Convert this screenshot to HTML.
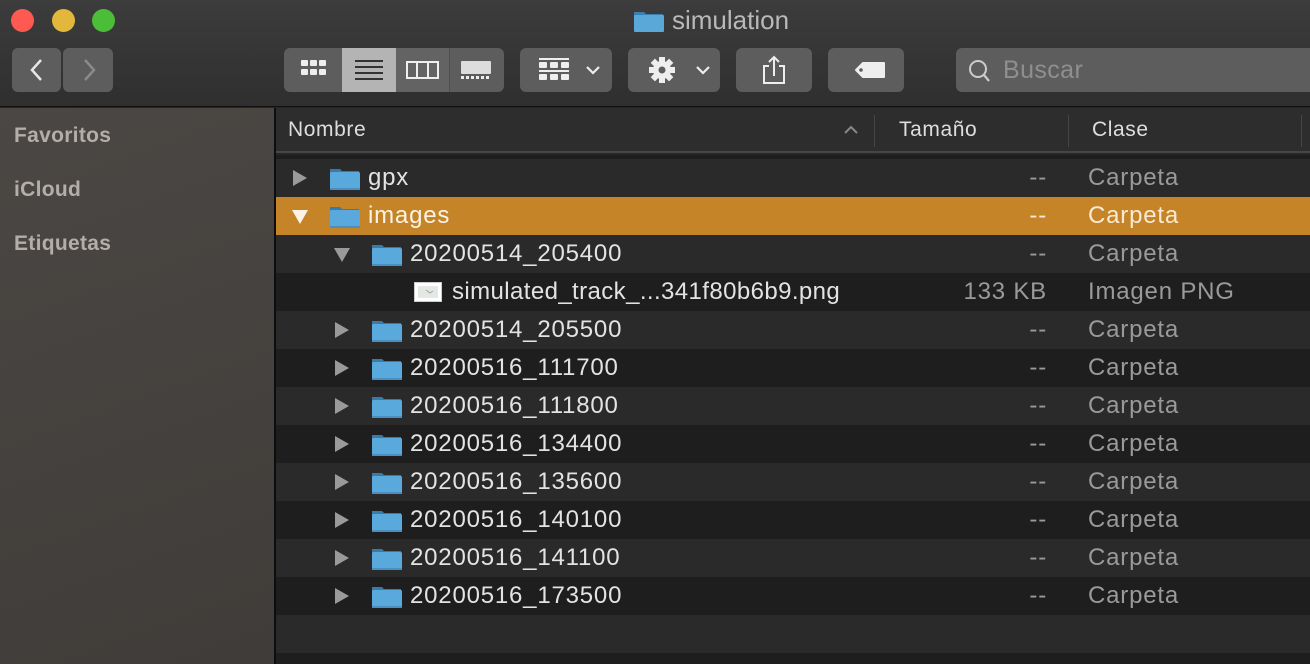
<!DOCTYPE html>
<html><head><meta charset="utf-8"><style>
*{margin:0;padding:0;box-sizing:border-box}
html,body{width:1310px;height:664px;overflow:hidden}
body{background:#262626;font-family:"Liberation Sans",Helvetica,sans-serif;position:relative}
.tb{position:absolute;left:0;top:0;width:1310px;height:107px;background:linear-gradient(#3c3c3c,#2f2f2f);border-bottom:1px solid #111}
.dot{position:absolute;top:9px;width:23px;height:23px;border-radius:50%}
.btn{position:absolute;top:48px;height:44px;background:#5d5d5d;border-radius:6px}
.title{position:absolute;top:5px;color:#b9b9b9;font-size:26px}
.side{position:absolute;left:0;top:108px;width:274px;height:556px;background:linear-gradient(160deg,#4b4744,#403c39)}
.side div{position:absolute;left:14px;color:#b3aeaa;font-size:21px;font-weight:bold;letter-spacing:0.3px}
.sep{position:absolute;left:274px;top:108px;width:2px;height:556px;background:#0d0d0d}
.hdr{position:absolute;left:276px;top:108px;width:1034px;height:45px;background:#2d2d2d;border-bottom:2px solid #474747}
.hdr span{position:absolute;top:10px;color:#dedede;font-size:21px;letter-spacing:0.6px}
.hdr i{position:absolute;top:7px;width:1px;height:32px;background:#454545}
.gap{position:absolute;left:276px;top:155px;width:1034px;height:4px;background:#1e1e1e}
.row{position:absolute;left:276px;width:1034px;height:38px;color:#e3e3e3;font-size:24px;letter-spacing:0.8px}
.l{background:#2a2a2a}.d{background:#1e1e1e}.sel{background:#c58428;color:#fbf3e6}
.row .n{position:absolute;top:5px}
.row .s{position:absolute;right:263px;top:5px;color:#9a9a9a}
.row .k{position:absolute;left:812px;top:5px;color:#9a9a9a}
.sel .s,.sel .k{color:#f8ead4}
.tri{position:absolute;top:11px;width:0;height:0;border-top:8px solid transparent;border-bottom:8px solid transparent;border-left:14px solid #9a9a9a}
.trd{position:absolute;top:13px;width:0;height:0;border-left:8px solid transparent;border-right:8px solid transparent;border-top:14px solid #9a9a9a}
.fold{position:absolute;top:8px;width:31px;height:23px}
</style></head><body>
<div class="tb">
<div class="dot" style="left:11px;background:#fe5a52"></div>
<div class="dot" style="left:52px;background:#e2b83c"></div>
<div class="dot" style="left:92px;background:#4cbd38"></div>
<svg style="position:absolute;left:633px;top:9px" width="31" height="23" viewBox="0 0 31 23"><path d="M1 3h10l2 2h17v17H1z" fill="#3b7fae"/><rect x="1" y="6" width="30" height="17" rx="1" fill="#5aa8d8"/></svg>
<div class="title" style="left:672px">simulation</div>
<div class="btn" style="left:12px;width:49px"><svg width="49" height="44"><path d="M29 12L20 22L29 32" stroke="#e6e6e6" stroke-width="2.5" fill="none"/></svg></div>
<div class="btn" style="left:63px;width:50px"><svg width="50" height="44"><path d="M22 12L31 22L22 32" stroke="#8a8a8a" stroke-width="2.5" fill="none"/></svg></div>
<div class="btn" style="left:284px;width:220px;overflow:hidden">
<svg width="220" height="44">
<rect x="58" y="0" width="54" height="44" fill="#b4b4b4"/>
<rect x="112" y="0" width="54" height="44" fill="#636363"/>
<line x1="165.5" y1="0" x2="165.5" y2="44" stroke="#4f4f4f"/>
<g fill="#eee"><rect x="17" y="12" width="7" height="6" rx="1"/><rect x="26" y="12" width="7" height="6" rx="1"/><rect x="35" y="12" width="7" height="6" rx="1"/><rect x="17" y="21" width="7" height="6" rx="1"/><rect x="26" y="21" width="7" height="6" rx="1"/><rect x="35" y="21" width="7" height="6" rx="1"/></g>
<g stroke="#333" stroke-width="2"><line x1="71" y1="13" x2="99" y2="13"/><line x1="71" y1="19" x2="99" y2="19"/><line x1="71" y1="25" x2="99" y2="25"/><line x1="71" y1="31" x2="99" y2="31"/></g>
<rect x="123" y="14" width="31" height="16" fill="none" stroke="#eee" stroke-width="2"/><line x1="133" y1="14" x2="133" y2="30" stroke="#eee" stroke-width="2"/><line x1="144" y1="14" x2="144" y2="30" stroke="#eee" stroke-width="2"/>
<rect x="177" y="13" width="30" height="13" rx="1" fill="#ddd"/><g fill="#eee"><rect x="177" y="28" width="3" height="3"/><rect x="182" y="28" width="3" height="3"/><rect x="187" y="28" width="3" height="3"/><rect x="192" y="28" width="3" height="3"/><rect x="197" y="28" width="3" height="3"/><rect x="202" y="28" width="3" height="3"/></g>
</svg></div>
<div class="btn" style="left:520px;width:92px"><svg width="92" height="44"><g fill="#eee"><rect x="19" y="10" width="30" height="2"/><rect x="19" y="14" width="8" height="6" rx="1"/><rect x="30" y="14" width="8" height="6" rx="1"/><rect x="41" y="14" width="8" height="6" rx="1"/><rect x="19" y="22" width="30" height="2"/><rect x="19" y="26" width="8" height="6" rx="1"/><rect x="30" y="26" width="8" height="6" rx="1"/><rect x="41" y="26" width="8" height="6" rx="1"/></g><path d="M67 19l6 6 6-6" stroke="#eee" stroke-width="2.2" fill="none"/></svg></div>
<div class="btn" style="left:628px;width:92px"><svg width="92" height="44"><g transform="translate(34 22)"><g fill="#eee"><rect x="-3" y="-13" width="6" height="26"/><rect x="-3" y="-13" width="6" height="26" transform="rotate(45)"/><rect x="-3" y="-13" width="6" height="26" transform="rotate(90)"/><rect x="-3" y="-13" width="6" height="26" transform="rotate(135)"/><circle r="9"/></g><circle r="3.5" fill="#5d5d5d"/></g><path d="M69 19l6 6 6-6" stroke="#eee" stroke-width="2.2" fill="none"/></svg></div>
<div class="btn" style="left:736px;width:76px"><svg width="76" height="44"><path d="M33 18h-5v17h20v-17h-5M38 28V9M33 14l5-5 5 5" stroke="#eee" stroke-width="2" fill="none"/></svg></div>
<div class="btn" style="left:828px;width:76px"><svg width="76" height="44"><path d="M28 22l7-7h21v14h-21z" fill="#eee" stroke="#eee" stroke-width="2" stroke-linejoin="round"/><circle cx="33" cy="22" r="1.8" fill="#5d5d5d"/></svg></div>
<div class="btn" style="left:956px;width:360px"><svg width="40" height="44"><circle cx="22" cy="21" r="8" stroke="#ccc" stroke-width="2" fill="none"/><line x1="28" y1="27" x2="33" y2="33" stroke="#ccc" stroke-width="2.2"/></svg><span style="position:absolute;left:47px;top:8px;color:#8f8f8f;font-size:25px;letter-spacing:0.4px">Buscar</span></div>
</div>
<div class="side"><div style="top:16px">Favoritos</div><div style="top:70px">iCloud</div><div style="top:124px">Etiquetas</div></div>
<div class="sep"></div>
<div class="hdr"><span style="left:12px">Nombre</span><svg style="position:absolute;left:568px;top:17px" width="14" height="10"><path d="M1 8l6-6 6 6" stroke="#888" stroke-width="2" fill="none"/></svg><i style="left:598px"></i><span style="left:623px">Tamaño</span><i style="left:792px"></i><span style="left:816px">Clase</span><i style="left:1025px"></i></div>
<div class="gap"></div>
<svg width="0" height="0" style="position:absolute"><defs><symbol id="f" viewBox="0 0 31 23"><path d="M1 2h10l2 2h17v18H1z" fill="#3a7aa6"/><rect x="1" y="5" width="30" height="18" rx="1.5" fill="#5aa9dc"/><rect x="1" y="21" width="30" height="2" fill="#4a8fbf"/></symbol></defs></svg>
<div class="row l" style="top:159px"><div class="tri" style="left:17px"></div><svg class="fold" style="left:53px"><use href="#f"/></svg><span class="n" style="left:92px">gpx</span><span class="s">--</span><span class="k">Carpeta</span></div>
<div class="row sel" style="top:197px"><div class="trd" style="left:16px;border-top-color:#fbf3e6"></div><svg class="fold" style="left:53px"><use href="#f"/></svg><span class="n" style="left:92px">images</span><span class="s">--</span><span class="k">Carpeta</span></div>
<div class="row l" style="top:235px"><div class="trd" style="left:58px"></div><svg class="fold" style="left:95px"><use href="#f"/></svg><span class="n" style="left:134px">20200514_205400</span><span class="s">--</span><span class="k">Carpeta</span></div>
<div class="row d" style="top:273px"><svg style="position:absolute;left:138px;top:9px" width="28" height="20"><rect x="0.5" y="0.5" width="27" height="19" fill="#fff" stroke="#ccc"/><rect x="4" y="4" width="20" height="12" fill="#e4e8e4"/><path d="M12 8l4 3 3-2" stroke="#9a9" fill="none"/></svg><span class="n" style="left:176px;letter-spacing:0.4px">simulated_track_...341f80b6b9.png</span><span class="s">133 KB</span><span class="k">Imagen PNG</span></div>
<div class="row l" style="top:311px"><div class="tri" style="left:59px"></div><svg class="fold" style="left:95px"><use href="#f"/></svg><span class="n" style="left:134px">20200514_205500</span><span class="s">--</span><span class="k">Carpeta</span></div>
<div class="row d" style="top:349px"><div class="tri" style="left:59px"></div><svg class="fold" style="left:95px"><use href="#f"/></svg><span class="n" style="left:134px">20200516_111700</span><span class="s">--</span><span class="k">Carpeta</span></div>
<div class="row l" style="top:387px"><div class="tri" style="left:59px"></div><svg class="fold" style="left:95px"><use href="#f"/></svg><span class="n" style="left:134px">20200516_111800</span><span class="s">--</span><span class="k">Carpeta</span></div>
<div class="row d" style="top:425px"><div class="tri" style="left:59px"></div><svg class="fold" style="left:95px"><use href="#f"/></svg><span class="n" style="left:134px">20200516_134400</span><span class="s">--</span><span class="k">Carpeta</span></div>
<div class="row l" style="top:463px"><div class="tri" style="left:59px"></div><svg class="fold" style="left:95px"><use href="#f"/></svg><span class="n" style="left:134px">20200516_135600</span><span class="s">--</span><span class="k">Carpeta</span></div>
<div class="row d" style="top:501px"><div class="tri" style="left:59px"></div><svg class="fold" style="left:95px"><use href="#f"/></svg><span class="n" style="left:134px">20200516_140100</span><span class="s">--</span><span class="k">Carpeta</span></div>
<div class="row l" style="top:539px"><div class="tri" style="left:59px"></div><svg class="fold" style="left:95px"><use href="#f"/></svg><span class="n" style="left:134px">20200516_141100</span><span class="s">--</span><span class="k">Carpeta</span></div>
<div class="row d" style="top:577px"><div class="tri" style="left:59px"></div><svg class="fold" style="left:95px"><use href="#f"/></svg><span class="n" style="left:134px">20200516_173500</span><span class="s">--</span><span class="k">Carpeta</span></div>
<div class="row l" style="top:615px"></div>
<div class="row d" style="top:653px;height:11px"></div>
</body></html>
